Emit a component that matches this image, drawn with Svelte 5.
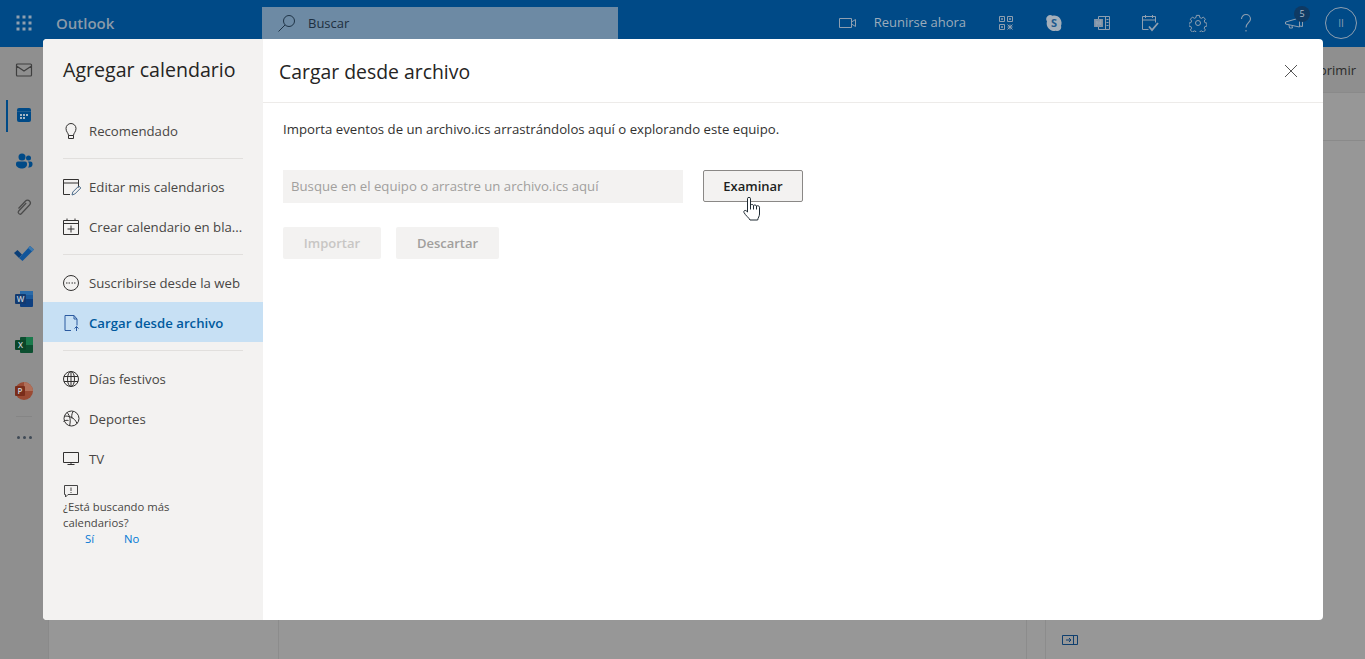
<script>
    // left menu of the dialog, grouped by divider
    const menuGroups = [
        [{ id: 'bulb', label: 'Recomendado' }],
        [
            { id: 'edit', label: 'Editar mis calendarios' },
            { id: 'plus', label: 'Crear calendario en bla...' }
        ],
        [
            { id: 'web', label: 'Suscribirse desde la web' },
            { id: 'file', label: 'Cargar desde archivo', active: true }
        ],
        [
            { id: 'globe', label: 'Días festivos' },
            { id: 'ball', label: 'Deportes' },
            { id: 'tv', label: 'TV' }
        ]
    ]
</script>

{#snippet menuIcon(id)}
    <svg width="20" height="20" viewBox="0 0 20 20" fill="none" stroke="currentColor" stroke-width="1">
        {#if id === 'bulb'}
            <path d="M7.500 14.500c0-2.500-2.500-3.500-2.500-7a5 5 0 0 1 10 0c0 3.500-2.500 4.500-2.500 7z M7.500 14.500v3h5v-3" />
        {:else if id === 'edit'}
            <path d="M9 17.500H2.500V2.500h15v8 M2.500 6h15" />
            <path d="M11 18l.8-3 6-6 2 2-6 6z" stroke="#4a6b8a" />
        {:else if id === 'plus'}
            <path d="M2.500 3.500h15v14h-15z M2.500 6.500h15 M10 8.500v7 M6.500 12h7 M6 1.500v2 M14 1.500v2" />
        {:else if id === 'web'}
            <circle cx="10" cy="10" r="7.500" />
            <path d="M5 10h1.500 M7.500 10h1.500 M10.500 10h1.500 M13 10h1.500" />
        {:else if id === 'file'}
            <path d="M10 17.500H4V2.500h9l3 3.500v6.500 M13 2.500v3.500h3 M15.500 18v-4.500 M13.500 15.500l2-2 2 2" />
        {:else if id === 'globe'}
            <circle cx="10" cy="10" r="7.500" />
            <ellipse cx="10" cy="10" rx="3.500" ry="7.500" />
            <path d="M3 7.500h14 M3 12.500h14 M10 2.500v15" />
        {:else if id === 'ball'}
            <circle cx="10.500" cy="9.500" r="7.500" />
            <path d="M6 3.500c3 3 4 8 2.500 13.500 M3.500 7c4 0 10 1 12.500 7.500 M12 2.500c-1.500 3-1.500 5-1 7 M2.500 12.500c1.500-1 3-1.500 5-1" />
        {:else if id === 'tv'}
            <path d="M2.500 3.500h15v10h-15z M6.500 15.500h7 M10 13.500v2" />
        {/if}
    </svg>
{/snippet}

<div class="page">
    <header class="topbar">
        <div class="brand">
            <svg class="waffle" width="16" height="16" viewBox="0 0 16 16" fill="currentColor">
                {#each [1, 7, 13] as y}
                    {#each [1, 7, 13] as x}
                        <rect x={x - 0.5} y={y - 0.5} width="3" height="3" />
                    {/each}
                {/each}
            </svg>
            <span class="logo">Outlook</span>
        </div>
        <div class="search">
            <svg width="20" height="20" viewBox="0 0 20 20" fill="none" stroke="#1f3447" stroke-width="1">
                <circle cx="12" cy="8" r="5.500" />
                <path d="M8 12l-6.500 6.500" />
            </svg>
            <span>Buscar</span>
        </div>
        <div class="actions">
            <svg class="video" width="20" height="20" viewBox="0 0 20 20" fill="none" stroke="currentColor">
                <path d="M2.500 5.500h12v9h-12z M14.500 9l4-2.500v7l-4-2.500" />
            </svg>
            <span class="meet">Reunirse ahora</span>
            <div class="tool">
                <svg width="16" height="16" viewBox="0 0 16 16" fill="none" stroke="currentColor">
                    <path d="M1.500 1.500h5v5h-5z M9.500 1.500h5v5h-5z M1.500 9.500h5v5h-5z M3.500 3.500h1v1h-1z M11.500 3.500h1v1h-1z M3.500 11.500h1v1h-1z M9.500 9.500l5 5 M14.500 9.500l-5 5 M12 9.500v5 M9.500 12h5" />
                </svg>
            </div>
            <div class="tool">
                <svg width="18" height="18" viewBox="0 0 18 18">
                    <path d="M9 1.500a7.500 7.500 0 0 1 7 10.300 4 4 0 0 1-5.200 5 7.500 7.500 0 0 1-8.800-9.500A4 4 0 0 1 7.500 1.700 7.500 7.500 0 0 1 9 1.500z" fill="#a3afbb" />
                    <text x="9" y="13" text-anchor="middle" class="skype">S</text>
                </svg>
            </div>
            <div class="tool">
                <svg width="18" height="18" viewBox="0 0 18 18" fill="none" stroke="currentColor">
                    <path d="M5.500 2.500h11v13h-11z M12.500 2.500v13 M13.500 5.500h2 M13.500 8.500h2 M13.500 11.500h2" />
                    <rect x="1" y="5" width="9" height="8" fill="#7d8fa3" stroke="none" />
                    <text x="5.500" y="12" text-anchor="middle" class="note">N</text>
                </svg>
            </div>
            <div class="tool">
                <svg width="18" height="18" viewBox="0 0 18 18" fill="none" stroke="currentColor">
                    <path d="M7.500 15.500h-6V2.500h13v6 M1.500 6h13 M4.500 1v3 M11.500 1v3" />
                    <path d="M8 12.500l3 3.500 6-7" stroke-width="1.800" />
                </svg>
            </div>
            <div class="tool">
                <svg width="18" height="18" viewBox="0 0 18 18" fill="none" stroke="currentColor">
                    <circle cx="9" cy="9" r="2.500" />
                    <path d="M7.500 1.500h3l.4 2.200 1.700.7 1.900-1.200 2 2.100-1.200 1.800.7 1.700 2 .4v3l-2 .4-.7 1.700 1.200 1.800-2 2.100-1.900-1.200-1.700.7-.4 2.100h-3l-.4-2.100-1.700-.7-1.900 1.200-2-2.100 1.200-1.800-.7-1.700-2-.4v-3l2-.4.700-1.700-1.200-1.800 2-2.100 1.900 1.200 1.700-.7z" transform="translate(-.100 -.100) scale(1)" />
                </svg>
            </div>
            <div class="tool">
                <svg width="18" height="20" viewBox="0 0 18 20" fill="none" stroke="currentColor">
                    <path d="M4.500 6a4.500 4.500 0 0 1 9 0c0 3.500-4.500 4-4.500 8.500 M9 17v1.500" stroke-width="1.100" />
                </svg>
            </div>
            <div class="tool announce">
                <svg width="20" height="20" viewBox="0 0 20 20" fill="none" stroke="currentColor">
                    <path d="M1.500 9l14-4v9l-14-3z M5 12l.5 3h3l-.5-2 M15.500 6l3-.5v8l-3-.5" />
                </svg>
                <span class="count">5</span>
            </div>
            <div class="avatar">II</div>
        </div>
    </header>

    <div class="workspace">
        <nav class="rail">
            <svg class="railicon" width="18" height="18" viewBox="0 0 18 18" fill="none" stroke="#3f3f3f" stroke-width="1.200">
                <path d="M2.500 3h13a1 1 0 0 1 1 1v10a1 1 0 0 1-1 1h-13a1 1 0 0 1-1-1V4a1 1 0 0 1 1-1z M1.500 5l7.500 5 7.500-5" />
            </svg>
            <div class="current">
                <svg width="16" height="16" viewBox="0 0 16 16">
                    <rect x="1" y="1" width="14" height="14" rx="2" fill="#004a87" />
                    <path d="M1 4.500h14" stroke="#3b6c97" stroke-width=".6" />
                    <path d="M4 7h2v2H4z M7 7h2v2H7z M10 7h2v2h-2z M4 10h2v2H4z M7 10h2v2H7z" fill="#a5b5c4" />
                </svg>
            </div>
            <svg class="railicon" width="18" height="18" viewBox="0 0 18 18" fill="#004a87">
                <circle cx="7" cy="5" r="3.500" />
                <circle cx="13.500" cy="6" r="2.500" />
                <path d="M1 11.500a2 2 0 0 1 2-2h7a2 2 0 0 1 2 2v1c0 2.500-2.500 4-5 4s-6-1.500-6-4z M13 9.500h2.500a2 2 0 0 1 2 2v1c0 2-2 3.500-4.500 3 1-1 1-2.500 1-4z" />
            </svg>
            <svg class="railicon" width="18" height="18" viewBox="0 0 18 18" fill="none" stroke="#4a4a4a" stroke-width="1.200">
                <path d="M3.500 10.500l7-7.500a2.800 2.800 0 0 1 4 4l-8 8.500a1.800 1.800 0 0 1-2.800-2.500l7.500-8" />
            </svg>
            <svg class="railicon" width="20" height="18" viewBox="0 0 20 18">
                <path d="M0 9l3.500-3 4.500 4.500-3 3.500z" fill="#0b3f78" />
                <path d="M5 14l11-12 4 3.500L8.500 17z" fill="#11559a" />
                <path d="M14 4l2-2 4 3.500-2 2z" fill="#3f79ad" />
            </svg>
            <svg class="railicon" width="18" height="18" viewBox="0 0 18 18">
                <rect x="5" y="1" width="13" height="16" rx="1" fill="#0e3f80" />
                <rect x="5" y="1" width="13" height="4" fill="#2a6aa8" />
                <rect x="5" y="5" width="13" height="4" fill="#1c5a9c" />
                <rect x="0" y="4" width="11" height="10" rx="1" fill="#123a70" />
                <text x="5.500" y="12" text-anchor="middle" class="office">W</text>
            </svg>
            <svg class="railicon" width="18" height="18" viewBox="0 0 18 18">
                <rect x="5" y="1" width="13" height="16" rx="1" fill="#0c4f30" />
                <rect x="11" y="1" width="7" height="8" fill="#1a7a4c" />
                <rect x="0" y="4" width="11" height="10" rx="1" fill="#0a4528" />
                <text x="5.500" y="12" text-anchor="middle" class="office">X</text>
            </svg>
            <svg class="railicon" width="18" height="18" viewBox="0 0 18 18">
                <circle cx="9" cy="9" r="9" fill="#9a4a33" />
                <path d="M9 0a9 9 0 0 1 9 9H9z" fill="#b0705a" />
                <rect x="0" y="4" width="10" height="10" rx="1" fill="#7a2d1a" />
                <text x="5" y="12" text-anchor="middle" class="office">P</text>
            </svg>
            <div class="raildivider"></div>
            <div class="more"><i></i><i></i><i></i></div>
        </nav>
        <div class="folders"></div>
        <main class="calendar">
            <div class="ribbon"><span>Imprimir</span></div>
            <div class="subhead"></div>
            <div class="grid">
                <div class="gridmain"></div>
                <div class="gutter"></div>
                <aside class="agenda">
                    <svg width="16" height="10" viewBox="0 0 16 10" fill="none" stroke="#0f3f6e">
                        <path d="M.5.5h15v9H.5z M11.500.5v9 M4 5h5 M7 3l2 2-2 2" />
                    </svg>
                </aside>
            </div>
        </main>
    </div>

    <div class="dialog">
        <section class="side">
            <h2>Agregar calendario</h2>
            <div class="menu">
                {#each menuGroups as group, i}
                    {#if i > 0}<div class="divider"></div>{/if}
                    <ul>
                        {#each group as item}
                            <li class:active={item.active}>
                                {@render menuIcon(item.id)}
                                <span>{item.label}</span>
                            </li>
                        {/each}
                    </ul>
                {/each}
            </div>
            <div class="feedback">
                <svg width="16" height="16" viewBox="0 0 16 16" fill="none" stroke="#444">
                    <path d="M1.500 2.500h13v9H5l-2.500 2.500v-2.500h-1z M8 4.500v3.500 M8 9v1" />
                </svg>
                <p>¿Está buscando más calendarios?</p>
                <div class="answers"><a href="#si">Sí</a><a href="#no">No</a></div>
            </div>
        </section>
        <section class="content">
            <div class="title">
                <h1>Cargar desde archivo</h1>
                <svg width="16" height="16" viewBox="0 0 16 16" stroke="#555" stroke-width="1">
                    <path d="M2 2l12 12 M14 2L2 14" />
                </svg>
            </div>
            <div class="body">
                <p>Importa eventos de un archivo.ics arrastrándolos aquí o explorando este equipo.</p>
                <div class="pick">
                    <div class="filebox">Busque en el equipo o arrastre un archivo.ics aquí</div>
                    <button class="browse">Examinar</button>
                    <svg class="hand" width="18" height="24" viewBox="0 0 18 24" fill="#fff" stroke="#1f2a33" stroke-width="1" stroke-linejoin="round">
                        <path d="M4.500 15V1.800a1.500 1.500 0 0 1 3 0V8c.8-.8 2.700-.6 3 .4.800-.7 2.600-.5 3 .6.900-.6 3-.2 3 1.200V17c0 2.500-1.500 3.500-1.800 6H7c-1-2.200-4.500-4.500-6-7.500-.7-1.500.9-2.800 2.200-1.700z" />
                        <path d="M7.500 8v4.500 M10.500 8.500v4 M13.500 9v3.500" />
                    </svg>
                </div>
                <div class="buttons">
                    <button disabled class="off import">Importar</button>
                    <button disabled class="off discard">Descartar</button>
                </div>
            </div>
        </section>
    </div>
</div>

<style>
    :global(body) {
        margin: 0;
        overflow: hidden;
        font-family: "Open Sans", "Liberation Sans", sans-serif;
    }

    .page {
        position: relative;
        display: flex;
        flex-direction: column;
        width: 1365px;
        height: 659px;
        overflow: hidden;
        background: #979797;
    }

    .topbar {
        display: flex;
        align-items: flex-start;
        height: 47px;
        flex: none;
        background: #004a87;
        color: #8f9fb0;
    }

    .brand {
        display: flex;
        align-items: center;
        width: 262px;
        height: 45px;
    }

    .waffle {
        margin-left: 16px;
    }

    .logo {
        margin-left: 24px;
        font-size: 15px;
        font-weight: 600;
        color: #8b9aa9;
    }

    .search {
        display: flex;
        align-items: center;
        gap: 11px;
        width: 356px;
        height: 32px;
        margin-top: 7px;
        padding-left: 15px;
        box-sizing: border-box;
        background: #6d8aa4;
        font-size: 13px;
        color: #1d2f40;
    }

    .actions {
        display: flex;
        align-items: center;
        height: 45px;
        margin-left: auto;
        padding-right: 8px;
    }

    .video {
        margin-right: 17px;
    }

    .meet {
        margin-right: 16px;
        margin-top: -2px;
        font-size: 13px;
        color: #9cacbb;
    }

    .tool {
        position: relative;
        display: flex;
        align-items: center;
        justify-content: center;
        width: 48px;
        height: 45px;
    }

    .tool svg {
        display: block;
    }

    .skype {
        font: 700 11px "Open Sans", sans-serif;
        fill: #1d5a8e;
    }

    .note {
        font: 700 8px "Open Sans", sans-serif;
        fill: #004a87;
    }

    .office {
        font: 600 8px "Open Sans", sans-serif;
        fill: #c8d0d8;
    }

    .count {
        position: absolute;
        top: 6px;
        left: 24px;
        width: 16px;
        height: 16px;
        border-radius: 50%;
        background: #0f3a63;
        color: #aebbc8;
        font-size: 9px;
        line-height: 16px;
        text-align: center;
    }

    .avatar {
        display: flex;
        align-items: center;
        justify-content: center;
        width: 30px;
        height: 30px;
        margin-left: 7px;
        border: 1px solid #8f9fb0;
        border-radius: 50%;
        font-size: 10px;
    }

    .workspace {
        display: flex;
        flex: 1;
        min-height: 0;
    }

    .rail {
        display: flex;
        flex-direction: column;
        align-items: center;
        width: 48px;
        flex: none;
        background: #8f8f8f;
        border-right: 1px solid #8a8a8a;
    }

    .railicon {
        display: block;
        margin: 14px 0;
    }

    .current {
        position: relative;
        display: flex;
        align-items: center;
        justify-content: center;
        width: 100%;
        height: 46px;
        margin-top: -1px;
    }

    .current::before {
        content: "";
        position: absolute;
        left: 6px;
        top: 8px;
        width: 2px;
        height: 32px;
        background: #004a87;
    }

    .raildivider {
        width: 16px;
        height: 1px;
        margin-top: 2px;
        background: #858585;
    }

    .more {
        display: flex;
        gap: 3px;
        margin-top: 19px;
    }

    .more i {
        width: 3px;
        height: 3px;
        border-radius: 50%;
        background: #3f4a56;
    }

    .folders {
        width: 229px;
        flex: none;
        border-right: 1px solid #8c8c8c;
    }

    .calendar {
        display: flex;
        flex-direction: column;
        flex: 1;
    }

    .ribbon {
        display: flex;
        align-items: center;
        justify-content: flex-end;
        height: 45px;
        padding-right: 9px;
        background: #8f8f8f;
        border-bottom: 1px solid #8a8a8a;
        font-size: 13px;
        color: #2b2b2b;
    }

    .subhead {
        height: 47px;
        flex: none;
        border-bottom: 1px solid #8a8a8a;
    }

    .grid {
        display: flex;
        flex: 1;
    }

    .gridmain {
        flex: 1;
        border-right: 1px solid #8c8c8c;
    }

    .gutter {
        width: 18px;
        border-right: 1px solid #8c8c8c;
    }

    .agenda {
        width: 319px;
        display: flex;
        align-items: flex-end;
        padding: 0 0 14px 16px;
        box-sizing: border-box;
    }

    .dialog {
        position: absolute;
        left: 43px;
        top: 39px;
        display: flex;
        width: 1280px;
        height: 581px;
        overflow: hidden;
        border-radius: 4px;
        background: #fff;
    }

    .side {
        display: flex;
        flex-direction: column;
        width: 220px;
        flex: none;
        background: #f3f2f1;
    }

    h2 {
        margin: 16px 0 0 20px;
        font-size: 19.600px;
        font-weight: 500;
        line-height: 30px;
        color: #252423;
    }

    .menu {
        margin-top: 26px;
    }

    ul {
        display: flow-root;
        margin: 0;
        padding: 0;
        list-style: none;
    }

    li {
        display: flex;
        align-items: center;
        gap: 8px;
        height: 40px;
        padding-left: 18px;
        font-size: 13.200px;
        color: #484644;
    }

    li svg {
        flex: none;
        color: #323130;
    }

    li span {
        white-space: nowrap;
    }

    li.active {
        margin: -1px 0 1px;
        padding-top: 1px;
        box-sizing: border-box;
        background: #c7e0f4;
        color: #005a9e;
        font-weight: 600;
    }

    li.active svg {
        color: #2b5aa0;
    }

    .divider {
        height: 1px;
        margin: 7px 20px 8px;
        background: #e1dfdd;
    }

    .feedback {
        margin: 4px 0 0 20px;
        font-size: 11.300px;
        line-height: 16px;
        color: #484644;
    }

    .feedback svg {
        display: block;
    }

    .feedback p {
        width: 130px;
        margin: 0;
    }

    .answers {
        display: flex;
        gap: 30px;
        padding-left: 22px;
    }

    .answers a {
        color: #0078d4;
        text-decoration: none;
    }

    .content {
        flex: 1;
    }

    .title {
        display: flex;
        align-items: center;
        justify-content: space-between;
        height: 63px;
        padding: 0 24px 0 16px;
        border-bottom: 1px solid #edebe9;
    }

    h1 {
        margin: 2px 0 0;
        font-size: 19.400px;
        font-weight: 500;
        color: #252423;
    }

    .body {
        padding: 17px 20px;
    }

    .body p {
        margin: 0;
        font-size: 13.200px;
        line-height: 18px;
        color: #323130;
    }

    .pick {
        position: relative;
        display: flex;
        gap: 20px;
        margin-top: 32px;
    }

    .filebox {
        width: 400px;
        height: 33px;
        padding-left: 8px;
        box-sizing: border-box;
        background: #f3f2f1;
        font-size: 13.200px;
        line-height: 33px;
        color: #a19f9d;
    }

    button {
        font-family: inherit;
        font-size: 13px;
        font-weight: 600;
        border-radius: 2px;
    }

    .browse {
        width: 100px;
        height: 32px;
        padding: 0;
        border: 1px solid #8a8886;
        background: #f3f2f1;
        color: #201f1e;
    }

    .hand {
        position: absolute;
        left: 460px;
        top: 27px;
    }

    .buttons {
        display: flex;
        gap: 15px;
        margin-top: 24px;
    }

    .off {
        height: 32px;
        padding: 0;
        border: 0;
        background: #f3f2f1;
        color: #a19f9d;
    }

    .import {
        width: 98px;
        color: #c8c6c4;
    }

    .discard {
        width: 103px;
    }
</style>
